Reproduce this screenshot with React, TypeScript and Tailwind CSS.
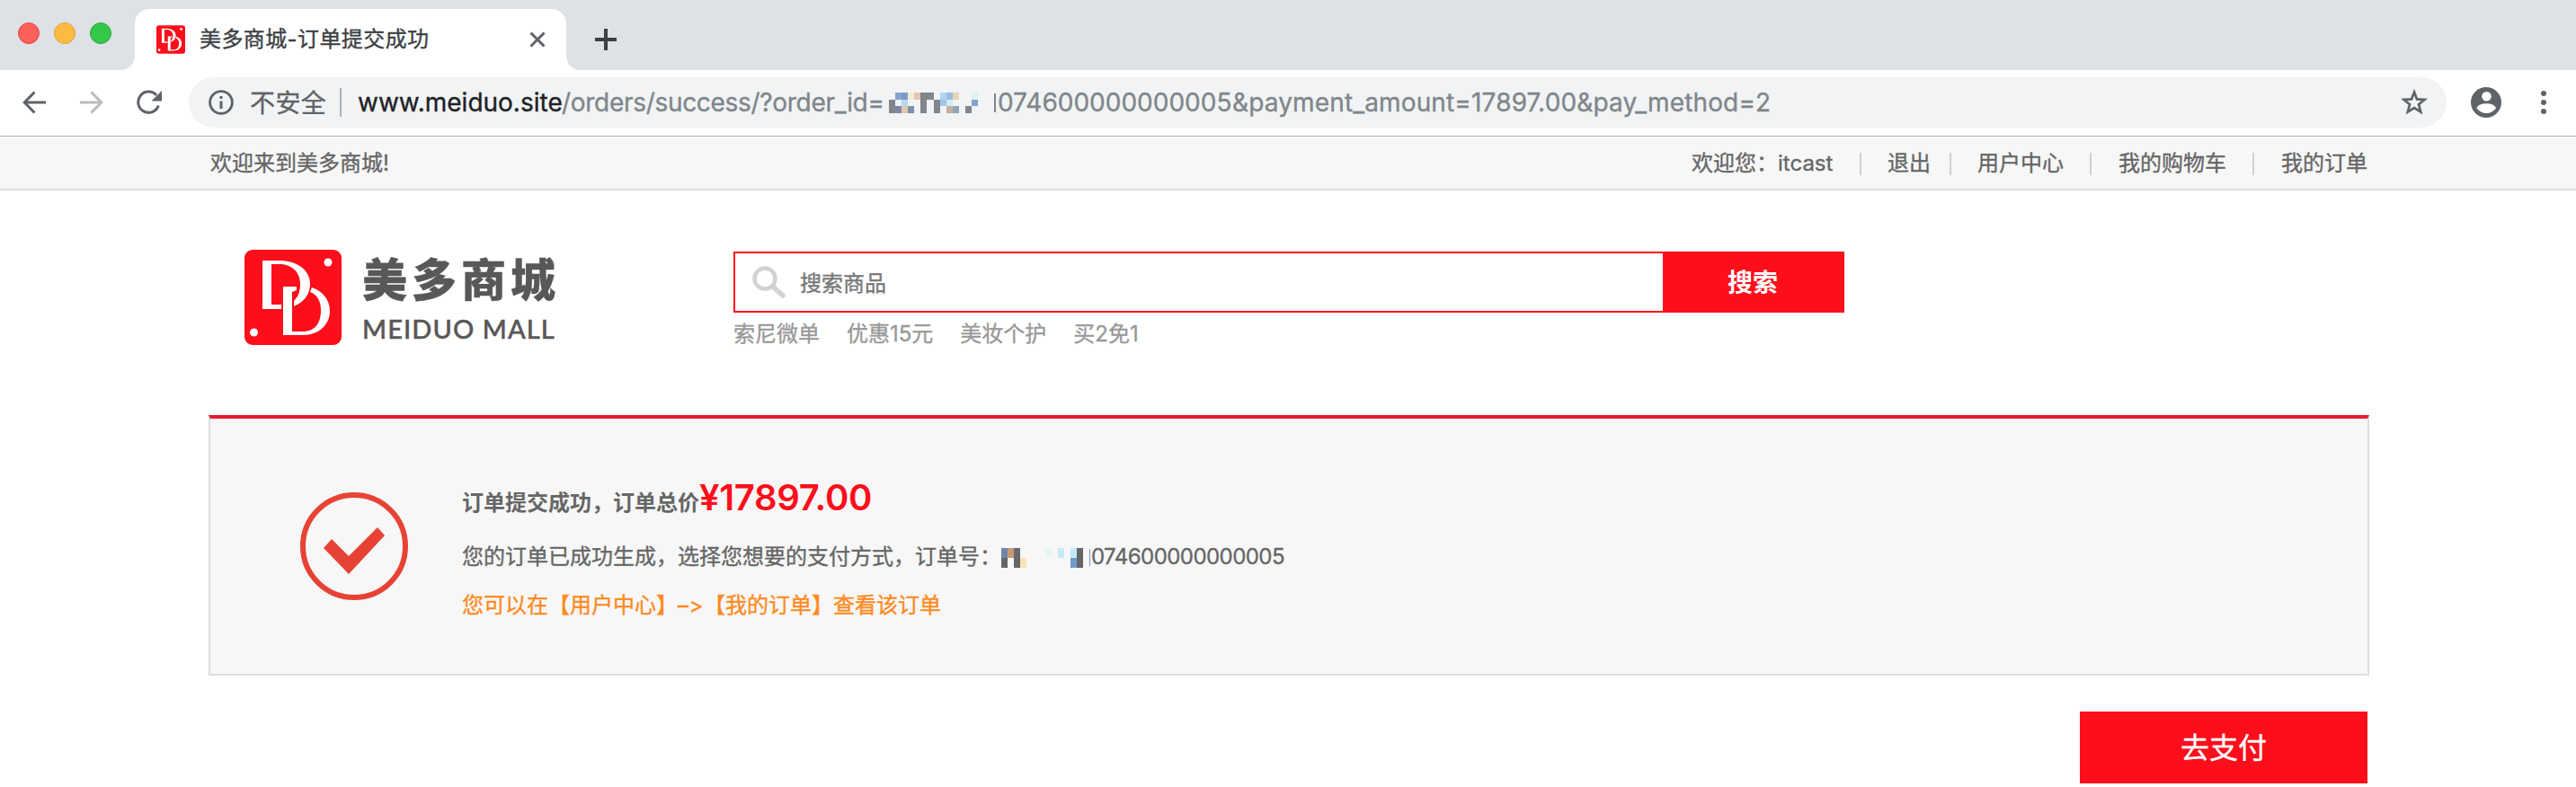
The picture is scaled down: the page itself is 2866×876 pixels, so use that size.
import type { ReactNode } from "react";

type Cell = [number, number, string];

function Mosaic({ cells, cols, rows, className }: { cells: Cell[]; cols: number; rows: number; className: string }) {
  return (
    <svg className={className} viewBox={`0 0 ${cols} ${rows}`} preserveAspectRatio="none" shapeRendering="crispEdges">
      {cells.map(([x, y, c]) => (
        <rect key={`${x}-${y}`} x={x} y={y} width="1" height="1" fill={c} />
      ))}
    </svg>
  );
}

const urlCells: Cell[] = [
  [0, 1, "#80868b"], [0, 2, "#80868b"],
  [1, 0, "#82a4cd"], [1, 1, "#eef2f4"], [1, 2, "#8286a4"],
  [2, 0, "#7d9ac6"], [2, 1, "#aed9ef"], [2, 2, "#e2c7b3"],
  [3, 0, "#efedd3"], [3, 2, "#8090a8"],
  [4, 0, "#e4c5ad"],
  [5, 0, "#80868b"], [5, 1, "#80868b"], [5, 2, "#80868b"],
  [6, 0, "#80868b"],
  [7, 1, "#80868b"], [7, 2, "#80868b"],
  [8, 0, "#b1d5ef"], [8, 1, "#a0c6ea"],
  [9, 0, "#9abfe2"], [9, 1, "#cfeef3"], [9, 2, "#c4b09f"],
  [10, 0, "#e8d3b5"], [10, 2, "#90a6b8"],
  [12, 2, "#80868b"],
  [13, 0, "#def1f5"], [13, 1, "#82a4cd"],
];

const orderCells: Cell[] = [
  [0, 0, "#7384ad"], [0, 1, "#666666"],
  [1, 0, "#c79a73"],
  [2, 0, "#666873"], [2, 1, "#666666"],
  [3, 1, "#fae3b6"],
  [7, 0, "#e5f6f6"],
  [9, 0, "#c7ebf7"],
  [11, 0, "#c7e9f7"], [11, 1, "#7199cc"],
  [12, 0, "#666666"], [12, 1, "#666666"],
];

function Badge({ className }: { className: string }) {
  return (
    <svg className={className} viewBox="0 0 108 106">
      <rect width="108" height="106" rx="9" fill="#fd0e1b" />
      <path
        fill="#fff"
        fillRule="evenodd"
        d="M20 12H38C58 12 73 22 73 38C73 50 66 58 55 63V57C60 52 62 46 62 38C62 24 52 16 38 16H30V61H41V66H20Z"
      />
      <path
        fill="#fff"
        d="M43 41H58V45L53 47V91H65C78 91 85 82 85 68C85 57 81 50 73 47L75 42C87 46 95 56 95 68C95 84 82 95 65 95H43Z"
      />
      <circle cx="93" cy="14" r="4.500" fill="#fff" />
      <circle cx="10.500" cy="92" r="4.500" fill="#fff" />
    </svg>
  );
}

function NavItem({ children }: { children: ReactNode }) {
  return <span className="whitespace-nowrap">{children}</span>;
}

function Bar({ className }: { className: string }) {
  return <span className={`h-[25px] w-[2px] shrink-0 bg-[#d0d0d0] ${className}`} />;
}

export default function App() {
  return (
    <div className="flex h-[876px] w-[2866px] flex-col overflow-hidden bg-white font-[Inter,'Noto_Sans_CJK_SC',sans-serif] text-[24px] text-[#666] [-webkit-text-stroke:0.35px] [font-feature-settings:'calt'_0]">
      {/* tab strip */}
      <div className="flex h-[78px] shrink-0 bg-[#dee1e6]">
        <div className="flex w-[134px] items-start gap-4 pl-5 pt-[25px]">
          <span className="size-6 rounded-full border border-[#e2463f] bg-[#fc605b]" />
          <span className="size-6 rounded-full border border-[#dfa033] bg-[#fdbc40]" />
          <span className="size-6 rounded-full border border-[#27aa35] bg-[#34c84a]" />
        </div>
        <svg className="mt-[62px] size-4" viewBox="0 0 16 16"><path d="M16 0V16H0C9 16 16 9 16 0Z" fill="#fff" /></svg>
        <div className="mt-[10px] flex h-[68px] w-[480px] items-center rounded-t-[16px] bg-white pl-6 pr-[23px]">
          <Badge className="size-8" />
          <span className="ml-4 flex-1 whitespace-nowrap leading-[36px] tracking-[0.400px] text-[#3c4043]">美多商城-订单提交成功</span>
          <svg className="size-[18px]" viewBox="0 0 18 18"><path d="M1.500 1.500L16.500 16.500M16.500 1.500L1.500 16.500" stroke="#5f6368" strokeWidth="3" /></svg>
        </div>
        <svg className="mt-[62px] size-4" viewBox="0 0 16 16"><path d="M0 0V16H16C7 16 0 9 0 0Z" fill="#fff" /></svg>
        <svg className="ml-4 mt-8 size-6" viewBox="0 0 24 24"><path d="M12 0V24M0 12H24" stroke="#3c4043" strokeWidth="4" /></svg>
      </div>

      {/* toolbar */}
      <div className="flex h-[74px] shrink-0 items-start border-b border-[#b5b6b8] pt-2">
        <div className="flex h-14 w-[210px] shrink-0 items-center pb-px pl-[25px]">
          <svg className="h-[26px] w-[26px]" viewBox="0 0 26 26"><path d="M26 13H3M13.500 1.500L2.200 13L13.500 24.500" fill="none" stroke="#5f6368" strokeWidth="3" /></svg>
          <svg className="ml-[38px] h-[26px] w-[26px]" viewBox="0 0 26 26"><path d="M0 13H23M12.500 1.500L23.800 13L12.500 24.500" fill="none" stroke="#babcbe" strokeWidth="3" /></svg>
          <svg className="ml-[37px] h-[28px] w-[28px]" viewBox="0 0 28 28"><path d="M24.300 17.500A11.600 11.600 0 1 1 22 6" fill="none" stroke="#5f6368" strokeWidth="3" /><path d="M28 1V12.500H16.500Z" fill="#5f6368" /></svg>
        </div>
        <div className="flex h-14 w-[2512px] shrink-0 items-center rounded-full bg-[#f1f3f4] pl-[22px] pr-[20px] text-[28px]">
          <svg className="size-[28px] shrink-0" viewBox="0 0 28 28"><circle cx="14" cy="14" r="12.400" fill="none" stroke="#5f6368" strokeWidth="2.800" /><path d="M14 12.500V21M14 7V10" stroke="#5f6368" strokeWidth="3" /></svg>
          <span className="ml-[18px] w-[85px] shrink-0 whitespace-nowrap pt-px leading-[40px] tracking-[0.400px] text-[#5f6368]">不安全</span>
          <span className="ml-[15px] h-8 w-[2px] bg-[#aeb1b5]" />
          <span className="ml-[18px] w-[227px] whitespace-nowrap text-[#202124]">www.meiduo.site</span>
          <span className="w-[358px] whitespace-nowrap tracking-[-0.300px] text-[#80868b]">/orders/success/?order_id=</span>
          <Mosaic cells={urlCells} cols={14} rows={3} className="ml-[6px] h-[23px] w-[99px]" />
          <span className="ml-[18px] h-[21px] w-[2px] bg-[#80868b]" />
          <span className="ml-[2px] w-[261px] whitespace-nowrap text-[#80868b]">074600000000005</span>
          <span className="whitespace-nowrap tracking-[0.150px] text-[#80868b]">&amp;payment_amount=17897.00&amp;pay_method=2</span>
          <span className="flex-1" />
          <svg className="size-[32px]" viewBox="0 0 32 32"><path d="M16 4.500L19 12.400L27.500 12.900L21 18.300L23.200 26.600L16 22L8.800 26.600L11 18.300L4.500 12.900L13 12.400Z" fill="none" stroke="#5f6368" strokeWidth="2.700" /></svg>
        </div>
        <div className="flex h-14 items-center">
          <svg className="ml-[27px] size-[34px]" viewBox="0 0 34 34"><circle cx="17" cy="17" r="17" fill="#5f6368" /><circle cx="17.500" cy="10.300" r="5.300" fill="#fff" /><path d="M6.500 23.500C7.500 20 12 18.300 17.300 18.300S27 20 28 23.500C25.500 27 21.500 29 17.300 29S9 27 6.500 23.500Z" fill="#fff" /></svg>
          <svg className="ml-[44px] h-[26px] w-[6px]" viewBox="0 0 6 26"><circle cx="3" cy="3" r="3" fill="#5f6368" /><circle cx="3" cy="13" r="3" fill="#5f6368" /><circle cx="3" cy="23" r="3" fill="#5f6368" /></svg>
        </div>
      </div>

      {/* site top bar */}
      <div className="flex h-[60px] shrink-0 items-center justify-between border-b-2 border-[#ddd] bg-[#f7f7f7] pl-[234px] pr-[232px] pt-[2px] leading-[56px]">
        <span>欢迎来到美多商城!</span>
        <div className="flex items-center">
          <NavItem>欢迎您：</NavItem>
          <span className="w-[62px]">itcast</span>
          <Bar className="ml-[29px] mr-[29px]" />
          <NavItem>退出</NavItem>
          <Bar className="ml-[21px] mr-[29px]" />
          <NavItem>用户中心</NavItem>
          <Bar className="ml-[29px] mr-[30px]" />
          <NavItem>我的购物车</NavItem>
          <Bar className="ml-[29px] mr-[30px]" />
          <NavItem>我的订单</NavItem>
        </div>
      </div>

      {/* logo and search */}
      <header className="flex h-[250px] shrink-0 items-start pl-[272px] pt-[66px]">
        <Badge className="h-[106px] w-[108px]" />
        <div className="ml-[23px] flex w-[413px] flex-col text-[#595757]">
          <span className="mt-[4px] whitespace-nowrap text-[50px] font-black leading-[60px] tracking-[5px]">美多商城</span>
          <span className="mt-[6px] whitespace-nowrap font-[Lato] text-[29px] font-medium leading-[36px] tracking-[1.100px] [-webkit-text-stroke:0.500px]">MEIDUO MALL</span>
        </div>
        <div className="mt-[2px]">
          <div className="flex h-[68px]">
            <div className="flex w-[1034px] items-center border-2 border-r-0 border-[#fd0e1b] pl-[19px] text-[#777]">
              <svg className="size-[38px]" viewBox="0 0 38 38"><circle cx="14" cy="15" r="11.500" fill="none" stroke="#d2d2d2" strokeWidth="4.500" /><path d="M23 24L34 34" stroke="#d2d2d2" strokeWidth="5.500" strokeLinecap="round" /></svg>
              <span className="ml-[15px] pt-[3px]">搜索商品</span>
            </div>
            <button className="w-[202px] bg-[#fd0e1b] pr-[2px] pt-px text-[28px] font-bold text-white [-webkit-text-stroke:0px]">搜索</button>
          </div>
          <div className="mt-[6px] flex gap-[30px] leading-[36px] text-[#999]">
            <span>索尼微单</span>
            <span>优惠15元</span>
            <span>美妆个护</span>
            <span>买2免1</span>
          </div>
        </div>
      </header>

      {/* result panel */}
      <main className="ml-[232px] flex h-[290px] w-[2404px] shrink-0 items-start border-2 border-t-4 border-[#ddd] border-t-[#e31c2e] bg-[#f7f7f7] pl-[100px]">
        <svg className="mt-[82px] size-[120px]" viewBox="0 0 120 120"><circle cx="60" cy="60" r="57" fill="none" stroke="#e74335" strokeWidth="6" /><path d="M26 62L35 52L54 71L86 39L94 48L54 91Z" fill="#e74335" /></svg>
        <div className="ml-[60px]">
          <div className="mt-[63px] flex h-[50px] items-baseline whitespace-nowrap font-bold [-webkit-text-stroke:0px]">
            <span>订单提交成功，订单总价</span>
            <span className="text-[40px] font-semibold leading-[50px] tracking-[-0.300px] text-[#fd0e1b]">¥17897.00</span>
          </div>
          <div className="mt-[23px] flex h-9 items-center whitespace-nowrap">
            <span>您的订单已成功生成，选择您想要的支付方式，订单号：</span>
            <Mosaic cells={orderCells} cols={13} rows={2} className="mt-px h-[22px] w-[91px]" />
            <span className="ml-[7px] h-[19px] w-px bg-[#7199cc]" />
            <span className="ml-[1px] tracking-[-0.550px]">074600000000005</span>
          </div>
          <div className="mt-[18px] h-9 whitespace-nowrap leading-[36px] text-[#ff8a22]">您可以在【用户中心】<span className="tracking-[0.500px]">–&gt;</span>【我的订单】查看该订单</div>
        </div>
      </main>

      <button className="ml-[2314px] mt-10 h-20 w-[320px] shrink-0 bg-[#fd0e1b] pt-[2px] text-[32px] text-white">去支付</button>
    </div>
  );
}
